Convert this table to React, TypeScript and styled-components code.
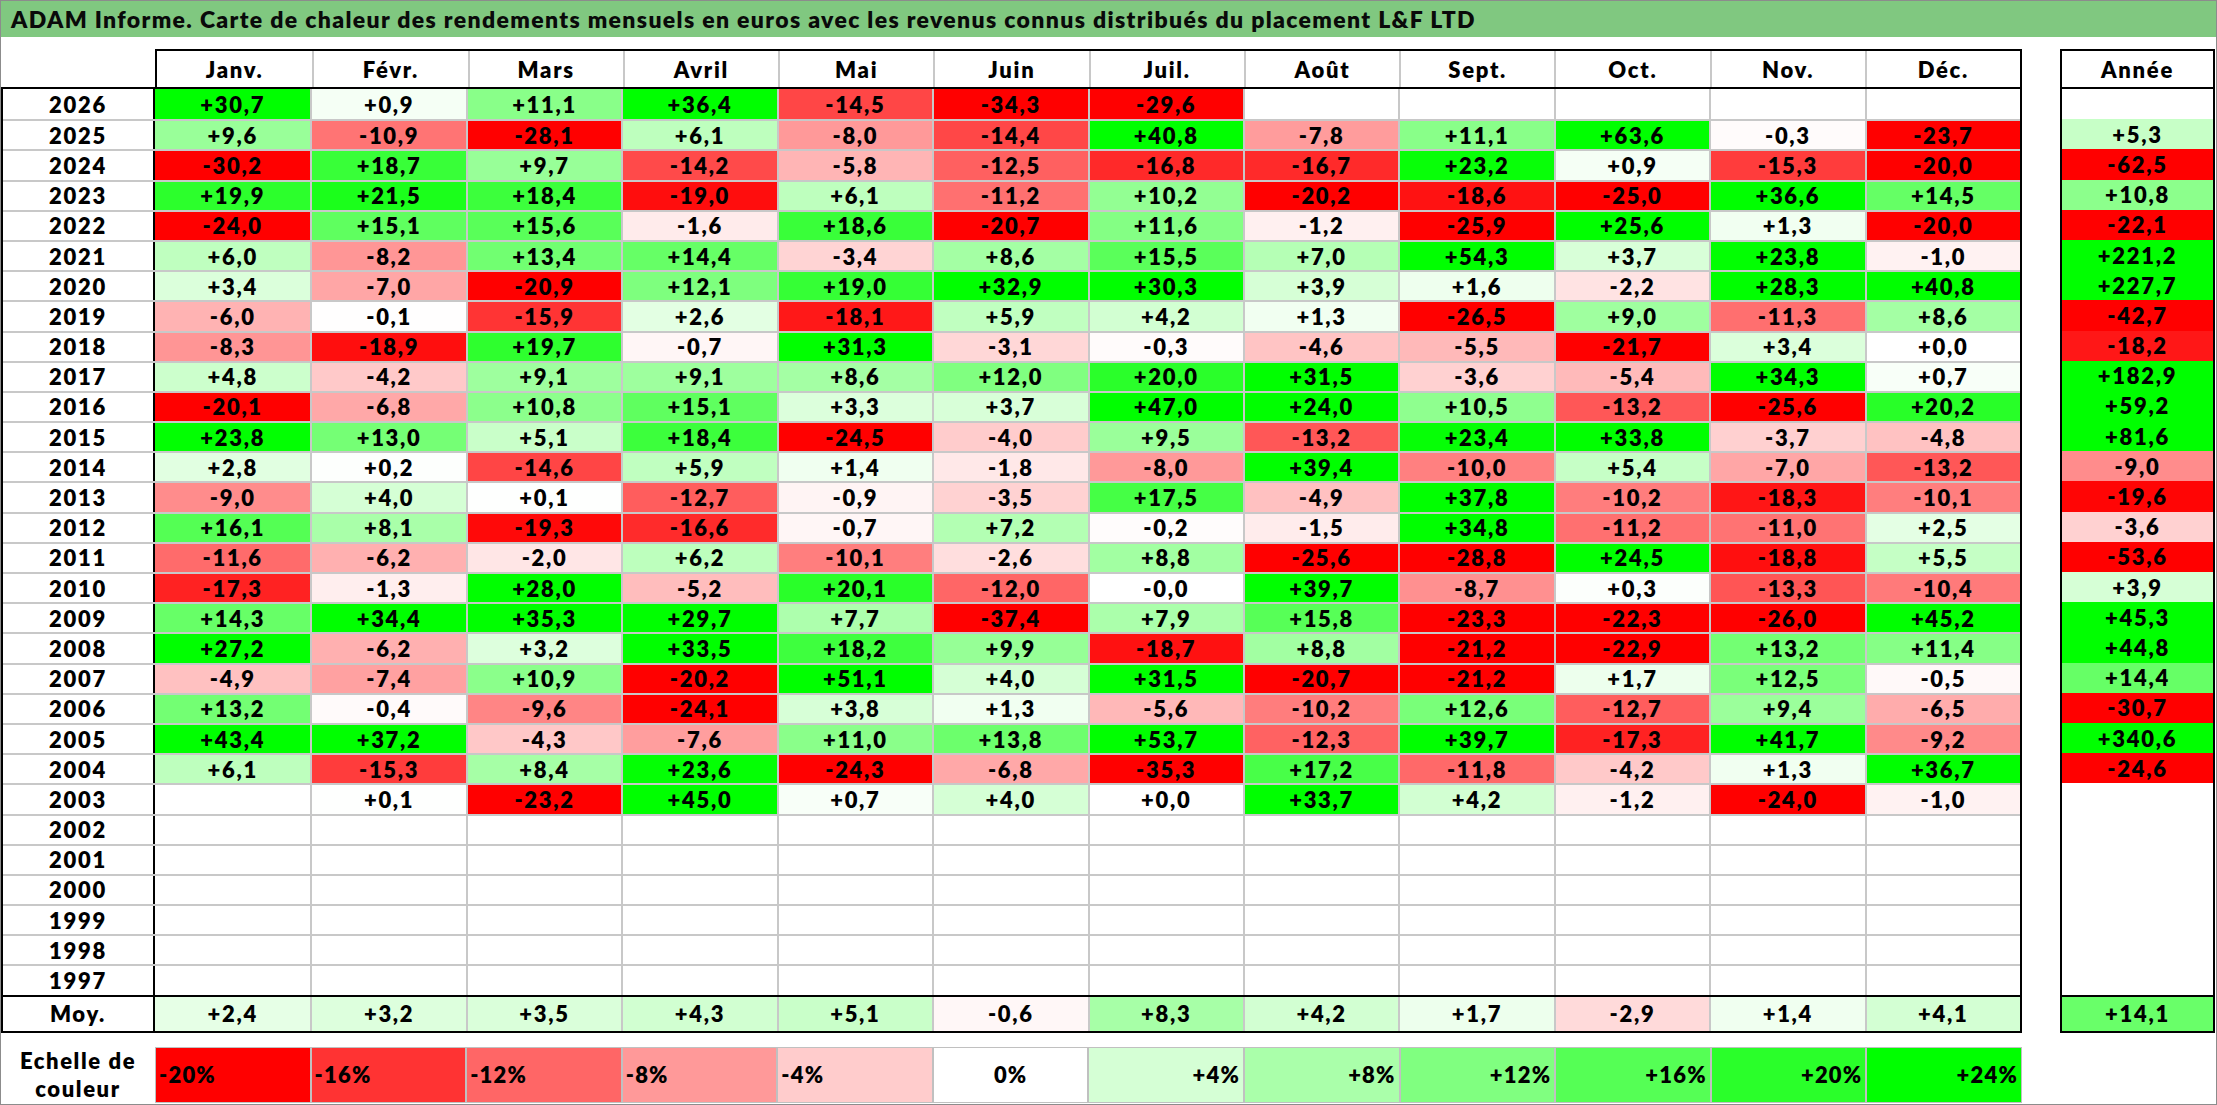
import styled, { createGlobalStyle } from 'styled-components';

const MONTHS = ['Janv.', 'Févr.', 'Mars', 'Avril', 'Mai', 'Juin', 'Juil.', 'Août', 'Sept.', 'Oct.', 'Nov.', 'Déc.'];

// year, 12 monthly values, yearly total ('' = empty cell)
const ROWS: [string, string[], string][] = [
  ['2026', ['+30,7', '+0,9', '+11,1', '+36,4', '-14,5', '-34,3', '-29,6', '', '', '', '', ''], ''],
  ['2025', ['+9,6', '-10,9', '-28,1', '+6,1', '-8,0', '-14,4', '+40,8', '-7,8', '+11,1', '+63,6', '-0,3', '-23,7'], '+5,3'],
  ['2024', ['-30,2', '+18,7', '+9,7', '-14,2', '-5,8', '-12,5', '-16,8', '-16,7', '+23,2', '+0,9', '-15,3', '-20,0'], '-62,5'],
  ['2023', ['+19,9', '+21,5', '+18,4', '-19,0', '+6,1', '-11,2', '+10,2', '-20,2', '-18,6', '-25,0', '+36,6', '+14,5'], '+10,8'],
  ['2022', ['-24,0', '+15,1', '+15,6', '-1,6', '+18,6', '-20,7', '+11,6', '-1,2', '-25,9', '+25,6', '+1,3', '-20,0'], '-22,1'],
  ['2021', ['+6,0', '-8,2', '+13,4', '+14,4', '-3,4', '+8,6', '+15,5', '+7,0', '+54,3', '+3,7', '+23,8', '-1,0'], '+221,2'],
  ['2020', ['+3,4', '-7,0', '-20,9', '+12,1', '+19,0', '+32,9', '+30,3', '+3,9', '+1,6', '-2,2', '+28,3', '+40,8'], '+227,7'],
  ['2019', ['-6,0', '-0,1', '-15,9', '+2,6', '-18,1', '+5,9', '+4,2', '+1,3', '-26,5', '+9,0', '-11,3', '+8,6'], '-42,7'],
  ['2018', ['-8,3', '-18,9', '+19,7', '-0,7', '+31,3', '-3,1', '-0,3', '-4,6', '-5,5', '-21,7', '+3,4', '+0,0'], '-18,2'],
  ['2017', ['+4,8', '-4,2', '+9,1', '+9,1', '+8,6', '+12,0', '+20,0', '+31,5', '-3,6', '-5,4', '+34,3', '+0,7'], '+182,9'],
  ['2016', ['-20,1', '-6,8', '+10,8', '+15,1', '+3,3', '+3,7', '+47,0', '+24,0', '+10,5', '-13,2', '-25,6', '+20,2'], '+59,2'],
  ['2015', ['+23,8', '+13,0', '+5,1', '+18,4', '-24,5', '-4,0', '+9,5', '-13,2', '+23,4', '+33,8', '-3,7', '-4,8'], '+81,6'],
  ['2014', ['+2,8', '+0,2', '-14,6', '+5,9', '+1,4', '-1,8', '-8,0', '+39,4', '-10,0', '+5,4', '-7,0', '-13,2'], '-9,0'],
  ['2013', ['-9,0', '+4,0', '+0,1', '-12,7', '-0,9', '-3,5', '+17,5', '-4,9', '+37,8', '-10,2', '-18,3', '-10,1'], '-19,6'],
  ['2012', ['+16,1', '+8,1', '-19,3', '-16,6', '-0,7', '+7,2', '-0,2', '-1,5', '+34,8', '-11,2', '-11,0', '+2,5'], '-3,6'],
  ['2011', ['-11,6', '-6,2', '-2,0', '+6,2', '-10,1', '-2,6', '+8,8', '-25,6', '-28,8', '+24,5', '-18,8', '+5,5'], '-53,6'],
  ['2010', ['-17,3', '-1,3', '+28,0', '-5,2', '+20,1', '-12,0', '-0,0', '+39,7', '-8,7', '+0,3', '-13,3', '-10,4'], '+3,9'],
  ['2009', ['+14,3', '+34,4', '+35,3', '+29,7', '+7,7', '-37,4', '+7,9', '+15,8', '-23,3', '-22,3', '-26,0', '+45,2'], '+45,3'],
  ['2008', ['+27,2', '-6,2', '+3,2', '+33,5', '+18,2', '+9,9', '-18,7', '+8,8', '-21,2', '-22,9', '+13,2', '+11,4'], '+44,8'],
  ['2007', ['-4,9', '-7,4', '+10,9', '-20,2', '+51,1', '+4,0', '+31,5', '-20,7', '-21,2', '+1,7', '+12,5', '-0,5'], '+14,4'],
  ['2006', ['+13,2', '-0,4', '-9,6', '-24,1', '+3,8', '+1,3', '-5,6', '-10,2', '+12,6', '-12,7', '+9,4', '-6,5'], '-30,7'],
  ['2005', ['+43,4', '+37,2', '-4,3', '-7,6', '+11,0', '+13,8', '+53,7', '-12,3', '+39,7', '-17,3', '+41,7', '-9,2'], '+340,6'],
  ['2004', ['+6,1', '-15,3', '+8,4', '+23,6', '-24,3', '-6,8', '-35,3', '+17,2', '-11,8', '-4,2', '+1,3', '+36,7'], '-24,6'],
  ['2003', ['', '+0,1', '-23,2', '+45,0', '+0,7', '+4,0', '+0,0', '+33,7', '+4,2', '-1,2', '-24,0', '-1,0'], ''],
  ['2002', Array(12).fill(''), ''],
  ['2001', Array(12).fill(''), ''],
  ['2000', Array(12).fill(''), ''],
  ['1999', Array(12).fill(''), ''],
  ['1998', Array(12).fill(''), ''],
  ['1997', Array(12).fill(''), ''],
];

const AVERAGES = ['+2,4', '+3,2', '+3,5', '+4,3', '+5,1', '-0,6', '+8,3', '+4,2', '+1,7', '-2,9', '+1,4', '+4,1'];
const AVERAGE_YEAR = '+14,1';

const SCALE = [-20, -16, -12, -8, -4, 0, 4, 8, 12, 16, 20, 24];

// red below zero (full at -20), green above (full at +24)
function heat(text: string) {
  if (!text) return '#ffffff';
  const v = parseFloat(text.replace(',', '.'));
  if (v >= 0) {
    const c = Math.round(255 * (1 - Math.min(v / 24, 1)));
    return `rgb(${c},255,${c})`;
  }
  const c = Math.round(255 * (1 - Math.min(-v / 20, 1)));
  return `rgb(255,${c},${c})`;
}

export default function App() {
  return (
    <>
      <GlobalStyle />
      <Frame>
        <TitleBar>
          ADAM Informe. Carte de chaleur des rendements mensuels en euros avec les revenus connus distribués du placement L&amp;F LTD
        </TitleBar>
        <Content>
          <MainColumn>
            <HeaderRow>
              <span />
              <MonthHeads>
                {MONTHS.map((m) => (
                  <HeadCell key={m}>{m}</HeadCell>
                ))}
              </MonthHeads>
            </HeaderRow>
            <TableBody>
              {ROWS.map(([year, values]) => (
                <Row key={year}>
                  <YearCell>{year}</YearCell>
                  {values.map((v, i) => (
                    <ValueCell key={i} $bg={heat(v)}>
                      {v}
                    </ValueCell>
                  ))}
                </Row>
              ))}
              <AverageRow>
                <YearCell>Moy.</YearCell>
                {AVERAGES.map((v, i) => (
                  <ValueCell key={i} $bg={heat(v)}>
                    {v}
                  </ValueCell>
                ))}
              </AverageRow>
            </TableBody>
            <Legend>
              <LegendLabel>
                Echelle de
                <br />
                couleur
              </LegendLabel>
              <LegendCells>
                {SCALE.map((s) => {
                  const label = s > 0 ? `+${s}%` : `${s}%`;
                  return (
                    <LegendCell key={s} $bg={heat(String(s))} $align={s < 0 ? 'flex-start' : s > 0 ? 'flex-end' : 'center'}>
                      {label}
                    </LegendCell>
                  );
                })}
              </LegendCells>
            </Legend>
          </MainColumn>
          <TotalColumn>
            <TotalHead>Année</TotalHead>
            <TotalBody>
              {ROWS.map(([year, , total]) => (
                <TotalCell key={year} $bg={heat(total)}>
                  {total}
                </TotalCell>
              ))}
              <TotalAverage $bg={heat(AVERAGE_YEAR)}>{AVERAGE_YEAR}</TotalAverage>
            </TotalBody>
          </TotalColumn>
        </Content>
      </Frame>
    </>
  );
}

const GlobalStyle = createGlobalStyle`
  html, body {
    margin: 0;
    padding: 0;
    background: #ffffff;
  }
  body {
    font-family: Lato, "Open Sans", sans-serif;
    color: #000000;
  }
  * {
    box-sizing: border-box;
  }
`;

const Frame = styled.div`
  border: 1px solid #8c8c8c;
  display: flex;
  flex-direction: column;
  height: 1105px;
  width: 2217px;
`;

const TitleBar = styled.div`
  align-items: center;
  background: #80c880;
  color: #0a0a0a;
  display: flex;
  font-size: 23px;
  font-weight: 800;
  height: 36px;
  letter-spacing: 1.35px;
  padding-left: 10px;
  white-space: nowrap;
`;

const Content = styled.div`
  display: flex;
  gap: 38px;
  padding-top: 12px;
`;

const MainColumn = styled.div`
  display: flex;
  flex-direction: column;
  width: 2021px;
`;

const cellText = `
  align-items: center;
  display: flex;
  font-size: 22px;
  font-weight: 800;
  justify-content: center;
  letter-spacing: 1.7px;
  white-space: nowrap;
`;

const HeaderRow = styled.div`
  display: grid;
  grid-template-columns: 154px 1fr;
  height: 38px;
`;

const MonthHeads = styled.div`
  border: 2px solid #000000;
  border-bottom: none;
  display: grid;
  grid-template-columns: repeat(12, 1fr);
`;

const HeadCell = styled.div`
  ${cellText}
  & + & {
    border-left: 2px solid #c8c8c8;
  }
`;

const TableBody = styled.div`
  border: 2px solid #000000;
  display: flex;
  flex-direction: column;
`;

const Row = styled.div`
  display: grid;
  grid-template-columns: 152px repeat(12, 1fr);
  height: 30.2px;
  & + & {
    border-top: 2px solid #c8c8c8;
  }
`;

const AverageRow = styled(Row)`
  height: 36px;
  && {
    border-top: 2px solid #000000;
  }
`;

const YearCell = styled.div`
  ${cellText}
  border-right: 2px solid #000000;
`;

const ValueCell = styled.div<{ $bg: string }>`
  ${cellText}
  background: ${({ $bg }) => $bg};
  & + & {
    border-left: 2px solid #c8c8c8;
  }
`;

const Legend = styled.div`
  display: grid;
  grid-template-columns: 154px 1fr;
  height: 56px;
  margin-top: 14px;
`;

const LegendLabel = styled.div`
  align-items: center;
  display: flex;
  font-size: 22px;
  font-weight: 800;
  justify-content: center;
  letter-spacing: 1.6px;
  line-height: 28px;
  text-align: center;
`;

const LegendCells = styled.div`
  display: grid;
  grid-template-columns: repeat(12, 1fr);
`;

const LegendCell = styled.div<{ $bg: string; $align: string }>`
  ${cellText}
  background: ${({ $bg }) => $bg};
  border: 1px solid #c0c0c0;
  justify-content: ${({ $align }) => $align};
  letter-spacing: 1.2px;
  padding: 0 3px;
`;

const TotalColumn = styled.div`
  display: flex;
  flex-direction: column;
  width: 155px;
`;

const TotalHead = styled.div`
  ${cellText}
  border: 2px solid #000000;
  border-bottom: none;
  height: 38px;
`;

const TotalBody = styled.div`
  border: 2px solid #000000;
  display: flex;
  flex-direction: column;
`;

const TotalCell = styled.div<{ $bg: string }>`
  ${cellText}
  background: ${({ $bg }) => $bg};
  height: 30.2px;
`;

const TotalAverage = styled(TotalCell)`
  border-top: 2px solid #000000;
  height: 36px;
`;
